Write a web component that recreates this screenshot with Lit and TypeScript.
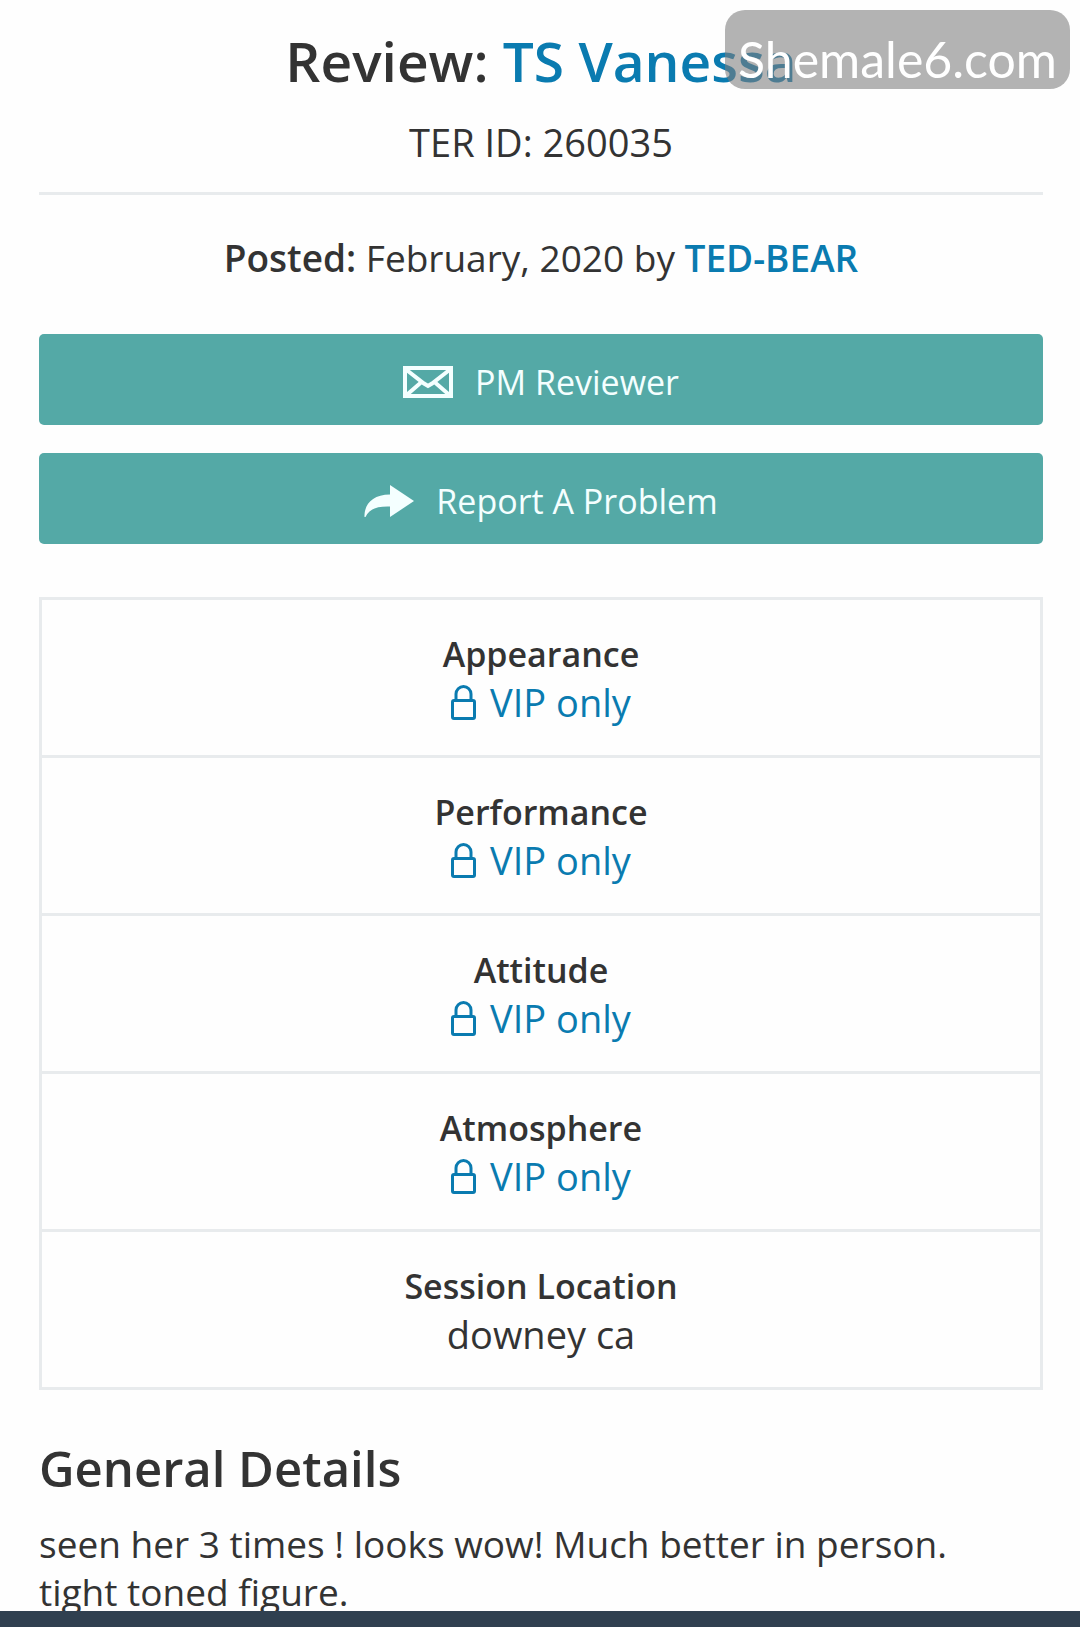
import { LitElement, html, css, svg } from "lit";
import { customElement } from "lit/decorators.js";

const mailIcon = svg`
  <svg class="icon" viewBox="0 0 50 32" aria-hidden="true">
    <path d="M2 2H48V30H2Z" fill="none" stroke="currentColor" stroke-width="4"/>
    <path d="M3 3.500L21 17.500L25 20L29 17.500L47 3.500M3 29.500L18 16.500M47 29.500L32 16.500" fill="none" stroke="currentColor" stroke-width="4"/>
  </svg>`;

const shareIcon = svg`
  <svg class="icon" viewBox="0 0 50 32" aria-hidden="true">
    <path d="M26 0L50 16L26 32V21.500C13 21 5 24 1.500 32H0.500C0 20 8 9.500 26 9.500Z" fill="currentColor"/>
  </svg>`;

const lockIcon = svg`
  <svg class="lock" viewBox="0 0 25 35" aria-hidden="true">
    <rect x="1.500" y="15.500" width="22" height="18" rx="1.500" fill="none" stroke="currentColor" stroke-width="3"/>
    <path d="M5 15V9A7.500 7.500 0 0 1 20 9V15" fill="none" stroke="currentColor" stroke-width="3"/>
  </svg>`;

const ratings = ["Appearance", "Performance", "Attitude", "Atmosphere"];

@customElement("app-root")
export class AppRoot extends LitElement {
  static styles = css`
    :host {
      display: flex;
      flex-direction: column;
      height: 100vh;
      position: relative;
      background: #fefefe;
      color: #333;
      font: 37px/48px "Open Sans", "Noto Sans", sans-serif;
    }
    main {
      flex: 1;
      min-height: 0;
      overflow-y: auto;
      scrollbar-width: none;
      padding: 0 37px 0 39px;
    }
    h1, h2, p, dl, dt, dd { margin: 0; }
    a { color: #0a7bb0; text-decoration: none; }
    header {
      padding: 25px 0 26px;
      text-align: center;
      border-bottom: 3px solid #e8ebed;
    }
    h1 {
      font-size: 55px;
      line-height: 72px;
      font-weight: 600;
    }
    .id {
      padding-top: 21px;
      font-size: 38px;
    }
    .posted {
      padding: 39px 0 52px;
      text-align: center;
    }
    .posted b, .posted a { font-weight: 600; }
    .actions {
      display: grid;
      gap: 28px;
      padding-bottom: 53px;
    }
    button {
      display: flex;
      align-items: center;
      justify-content: center;
      gap: 22px;
      height: 91px;
      padding: 4px 0 0;
      border: 0;
      border-radius: 5px;
      background: #54a9a6;
      color: #f4ffff;
      font: 34px/48px "Open Sans", "Noto Sans", sans-serif;
    }
    .icon { width: 50px; height: 32px; }
    dl {
      border: 3px solid #e8ebed;
      text-align: center;
    }
    .row { padding: 30px 0 29px; }
    .row + .row { border-top: 3px solid #e8ebed; }
    dt {
      font-size: 34px;
      font-weight: 600;
    }
    dd { font-size: 38px; }
    .vip {
      display: flex;
      align-items: center;
      justify-content: center;
      gap: 14px;
    }
    .lock { width: 25px; height: 35px; }
    h2 {
      padding: 48px 0 22px;
      font-size: 49px;
      line-height: 60px;
      font-weight: 600;
    }
    .bar {
      height: 16px;
      background: #304050;
    }
    .mark {
      position: absolute;
      top: 10px;
      right: 10px;
      padding: 20px 13px 0;
      border-radius: 20px;
      background: rgba(126, 126, 126, 0.59);
      color: #fff;
      font: 50px/59px Lato, sans-serif;
    }
  `;

  render() {
    return html`
      <main>
        <header>
          <h1>Review: <a href="#">TS Vanessa</a></h1>
          <p class="id">TER ID: 260035</p>
        </header>
        <p class="posted"><b>Posted:</b> February, 2020 by <a href="#">TED-BEAR</a></p>
        <div class="actions">
          <button type="button">${mailIcon}<span>PM Reviewer</span></button>
          <button type="button">${shareIcon}<span>Report A Problem</span></button>
        </div>
        <dl>
          ${ratings.map((name) => html`
            <div class="row">
              <dt>${name}</dt>
              <dd><a class="vip" href="#">${lockIcon}<span>VIP only</span></a></dd>
            </div>`)}
          <div class="row">
            <dt>Session Location</dt>
            <dd>downey ca</dd>
          </div>
        </dl>
        <h2>General Details</h2>
        <p>seen her 3 times ! looks wow! Much better in person.<br>tight toned figure.</p>
      </main>
      <footer class="bar"></footer>
      <div class="mark">Shemale6.com</div>
    `;
  }
}
